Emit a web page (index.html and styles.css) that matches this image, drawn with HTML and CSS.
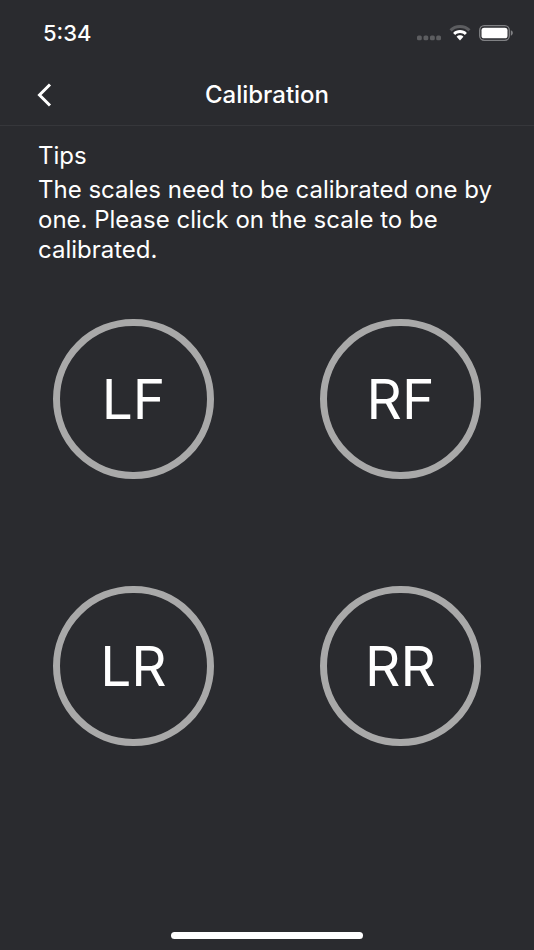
FILE: index.html
```html
<!DOCTYPE html>
<html lang="en">
<head>
<meta charset="utf-8">
<meta name="viewport" content="width=device-width, initial-scale=1">
<title>Calibration</title>
<link rel="stylesheet" href="styles.css">
</head>
<body>
<div class="status">
  <time class="clock">5:34</time>
  <div class="indicators">
    <svg width="26" height="16" viewBox="0 0 26 16" fill="#5c5d60" aria-hidden="true"><rect x="2" y="10.500" width="4.800" height="4.800" rx="1.600"/><rect x="8.500" y="10.500" width="4.800" height="4.800" rx="1.600"/><rect x="15" y="10.500" width="4.800" height="4.800" rx="1.600"/><rect x="21.200" y="10.500" width="4.800" height="4.800" rx="1.600"/></svg>
    <svg width="22" height="16" viewBox="0 0 22 16" fill="#fff" aria-hidden="true"><path fill="#5c5d60" d="M11 0C6.900 0 3.200 1.600 .5 4.200L2.600 6.400C4.800 4.300 7.800 3.100 11 3.100S17.200 4.300 19.400 6.400L21.500 4.200C18.800 1.600 15.100 0 11 0Z"/><path d="M11 5.100C8.300 5.100 5.900 6.100 4.100 7.900L6.200 10C7.500 8.800 9.200 8.100 11 8.100S14.500 8.800 15.800 10L17.900 7.900C16.100 6.100 13.700 5.100 11 5.100Z"/><path d="M11 10.300C9.700 10.300 8.500 10.800 7.600 11.700L11 15.500L14.400 11.700C13.500 10.800 12.300 10.300 11 10.300Z"/></svg>
    <svg width="35" height="16" viewBox="0 0 35 16" aria-hidden="true"><rect x=".7" y=".7" width="29.600" height="14.600" rx="4.500" fill="none" stroke="#808184" stroke-width="1.300"/><rect x="2.500" y="2.700" width="26" height="10.600" rx="2.600" fill="#fff"/><path d="M31.800 5.300C33.100 5.800 33.800 6.800 33.800 8S33.100 10.200 31.800 10.700Z" fill="#808184"/></svg>
  </div>
</div>
<header class="nav">
  <button class="back" type="button" aria-label="Back"><svg width="16" height="26" viewBox="0 0 16 26" fill="none" stroke="#fff" stroke-width="3" aria-hidden="true"><path d="M14 2.500L3.500 13L14 23.500"/></svg></button>
  <h1 class="title">Calibration</h1>
</header>
<main>
  <section class="tips">
    <h2 class="tips-title">Tips</h2>
    <p class="tips-text">The scales need to be calibrated one by one. Please click on the scale to be calibrated.</p>
  </section>
  <div class="scales">
    <button class="scale" type="button">LF</button>
    <button class="scale" type="button">RF</button>
    <button class="scale" type="button">LR</button>
    <button class="scale" type="button">RR</button>
  </div>
</main>
<footer class="home"><div class="home-bar"></div></footer>
</body>
</html>
```
FILE: styles.css
```css
* { box-sizing: border-box; }
body {
  margin: 0;
  min-height: 100vh;
  display: flex;
  flex-direction: column;
  background: #2a2b2f;
  color: #fff;
  font-family: Inter, "Liberation Sans", sans-serif;
}
h1, h2, p { margin: 0; }
button {
  padding: 0;
  border: 0;
  background: none;
  color: inherit;
  font: inherit;
  cursor: pointer;
}
svg { display: block; }
.status {
  height: 66px;
  padding: 0 20px 0 43px;
  display: flex;
  align-items: center;
  justify-content: space-between;
}
.clock { font-size: 22px; font-weight: 500; }
.indicators { display: flex; align-items: center; gap: 8px; }
.nav {
  height: 60px;
  padding: 0 36px 2px;
  display: grid;
  grid-template-columns: 1fr auto 1fr;
  align-items: center;
  border-bottom: 1px solid #36373b;
}
.back { justify-self: start; }
.title { font-size: 24px; font-weight: 500; }
.tips { padding: 15px 32px 0 38px; }
.tips-title, .tips-text { font-size: 24px; font-weight: 400; line-height: 30px; }
.tips-title { margin-bottom: 4px; }
.scales {
  padding-top: 54px;
  display: grid;
  grid-template-columns: 1fr 1fr;
  justify-items: center;
  row-gap: 107px;
}
.scale {
  width: 60%;
  aspect-ratio: 1;
  border: 7px solid #a9a9a9;
  border-radius: 50%;
  font-size: 55px;
}
.home {
  margin-top: auto;
  padding-bottom: 11px;
  display: flex;
  justify-content: center;
}
.home-bar { width: 36%; height: 7px; border-radius: 4px; background: #fff; }
```
